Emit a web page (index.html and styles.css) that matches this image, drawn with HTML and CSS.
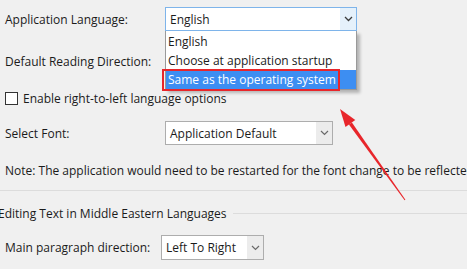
FILE: index.html
```html
<!DOCTYPE html>
<html lang="en">
<head>
    <meta charset="UTF-8">
    <title>Language Options</title>
    <link rel="stylesheet" href="styles.css">
</head>
<body>
    <div class="page">
        <div class="row row-lang">
            <span class="label">Application Language:</span>
            <div class="combo combo-active">
                <span class="combo-text">English</span>
                <span class="combo-arrow">
                    <svg width="9" height="6" viewBox="0 0 9 6"><path d="M1 1 L4.5 4.5 L8 1" fill="none" stroke="#3c3c3c" stroke-width="1.3"/></svg>
                </span>
            </div>
        </div>

        <div class="row row-dir">
            <span class="label">Default Reading Direction:</span>
        </div>

        <div class="row row-check">
            <span class="checkbox"></span>
            <span>Enable right-to-left language options</span>
        </div>

        <div class="row row-font">
            <span class="label">Select Font:</span>
            <div class="combo combo-font">
                <span class="combo-text">Application Default</span>
                <span class="combo-arrow">
                    <svg width="9" height="6" viewBox="0 0 9 6"><path d="M1 1 L4.5 4.5 L8 1" fill="none" stroke="#6a6a6a" stroke-width="1.2"/></svg>
                </span>
            </div>
        </div>

        <div class="row row-note">
            <span class="note">Note: The application would need to be restarted for the font change to be reflected.</span>
        </div>

        <div class="divider"></div>

        <div class="row row-section">
            <span class="section-title">Editing Text in Middle Eastern Languages</span>
            <span class="section-line"></span>
        </div>

        <div class="row row-para">
            <span class="label label-short">Main paragraph direction:</span>
            <div class="combo combo-para">
                <span class="combo-text">Left To Right</span>
                <span class="combo-arrow">
                    <svg width="9" height="6" viewBox="0 0 9 6"><path d="M1 1 L4.5 4.5 L8 1" fill="none" stroke="#6a6a6a" stroke-width="1.2"/></svg>
                </span>
            </div>
        </div>
    </div>

    <!-- open dropdown of the language combo -->
    <ul class="dropdown">
        <li>English</li>
        <li>Choose at application startup</li>
        <li class="selected">Same as the operating system</li>
    </ul>
    <div class="highlight-box"></div>

    <svg class="pointer" width="467" height="269" viewBox="0 0 467 269">
        <polygon points="405.4,199.7 404.6,200.3 348.9,124.6 351.9,122.6" fill="#e8262b"/>
        <polygon points="340,109 355.3,120.1 345.5,127.1" fill="#e8262b"/>
    </svg>
</body>
</html>
```

FILE: styles.css
```css
:root {
    --text: #1b1b1b;
    --bg: #f0f0f0;
    --red: #e8262b;
}

body {
    margin: 0;
    width: 467px;
    height: 269px;
    overflow: hidden;
    background: var(--bg);
    color: var(--text);
    font-family: 'Open Sans', 'Noto Sans', sans-serif;
    font-size: 12px;
    position: relative;
}

.page {
    padding-left: 5px;
    padding-top: 7px;
}

.row {
    display: flex;
    align-items: center;
    white-space: nowrap;
}

.label {
    width: 160px;
    flex: none;
}

.label-short {
    width: 156px;
}

.row-lang {
    height: 24px;
}

.row-dir {
    height: 24px;
    margin-top: 18px;
}

.row-check {
    height: 16px;
    margin-top: 17px;
    gap: 5px;
}

.checkbox {
    width: 11px;
    height: 11px;
    border: 1px solid #333;
    background: white;
}

.row-font {
    height: 24px;
    margin-top: 15px;
}

.row-note {
    height: 20px;
    margin-top: 15px;
}

.divider {
    margin-top: 10px;
    margin-left: -5px;
    height: 1px;
    background: #dcdcdc;
}

.row-section {
    height: 20px;
    margin-top: 12px;
    margin-left: -7px;
    gap: 6px;
}

.section-line {
    flex: 1;
    height: 1px;
    background: #dcdcdc;
}

.row-para {
    height: 25px;
    margin-top: 12px;
}

.combo {
    display: flex;
    height: 100%;
    box-sizing: border-box;
    border: 1px solid #adadad;
    background: white;
}

.combo-text {
    flex: 1;
    padding-left: 4px;
    display: flex;
    align-items: center;
}

.combo-arrow {
    width: 16px;
    display: flex;
    align-items: center;
    justify-content: center;
    background: #ececec;
}

.combo-active {
    width: 192px;
    border-color: #7eb4ea;
}

.combo-active .combo-arrow {
    background: #e5f1fb;
}

.combo-font {
    width: 168px;
}

.combo-para {
    width: 103px;
}

.dropdown {
    position: absolute;
    left: 165px;
    top: 31px;
    width: 192px;
    margin: 0;
    padding: 1px 0 0;
    list-style: none;
    box-sizing: border-box;
    background: white;
    border: 1px solid #9a9a9a;
    border-top: none;
    box-shadow: 3px 3px 3px rgba(0, 0, 0, 0.25);
}

.dropdown li {
    height: 19px;
    line-height: 19px;
    padding-left: 2px;
}

.dropdown .selected {
    background: #3d8ef2;
    color: white;
}

.highlight-box {
    position: absolute;
    left: 162px;
    top: 69px;
    width: 178px;
    height: 22px;
    box-sizing: border-box;
    border: 2px solid var(--red);
}

.pointer {
    position: absolute;
    left: 0;
    top: 0;
}
```
